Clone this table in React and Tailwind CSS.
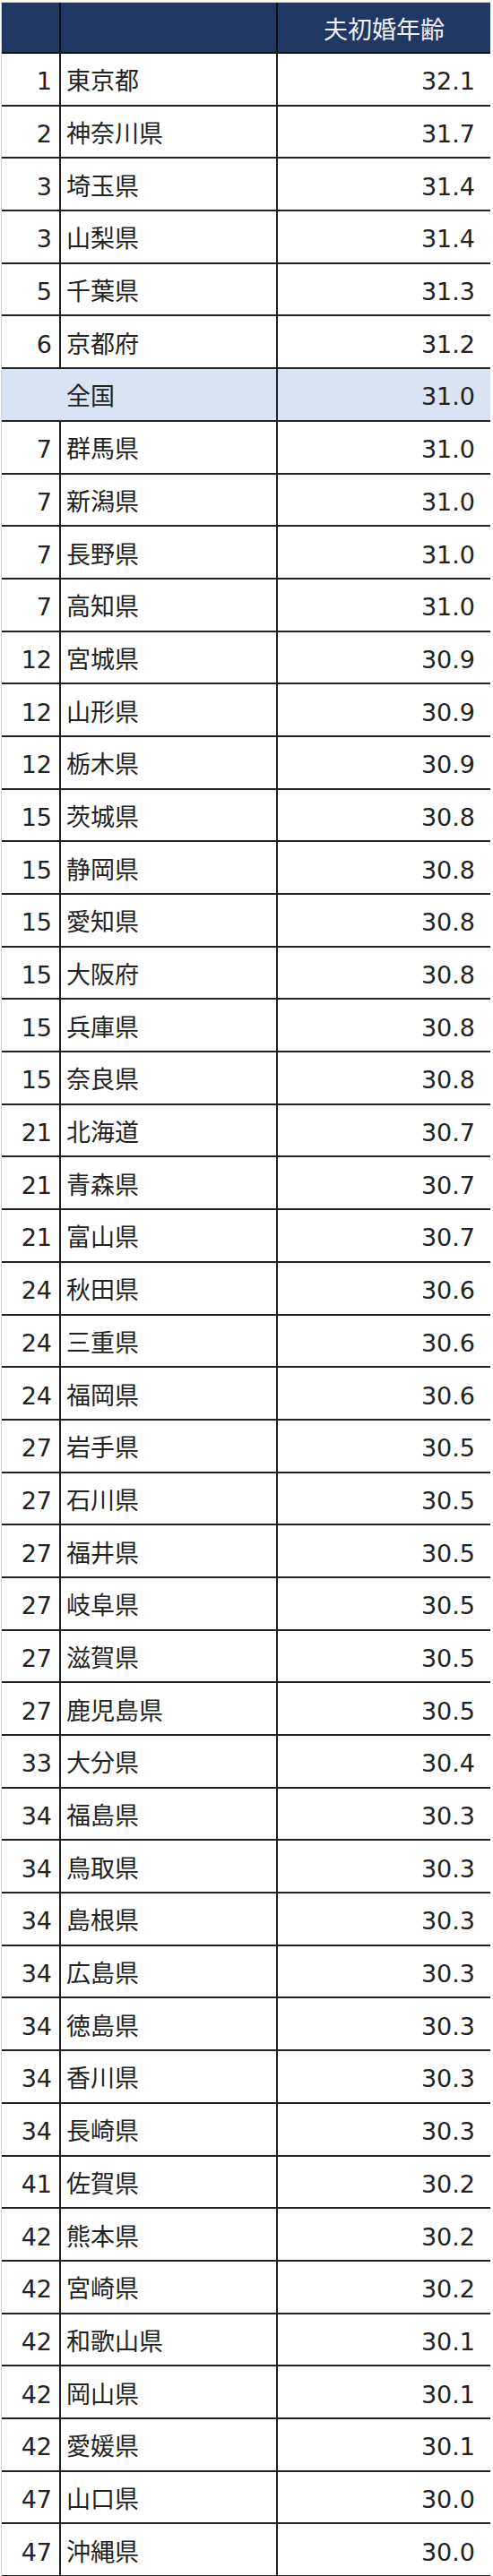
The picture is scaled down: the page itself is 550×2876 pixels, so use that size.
import React from "react";

const rows = [
  ["1", "東京都", "32.1"],
  ["2", "神奈川県", "31.7"],
  ["3", "埼玉県", "31.4"],
  ["3", "山梨県", "31.4"],
  ["5", "千葉県", "31.3"],
  ["6", "京都府", "31.2"],
  ["", "全国", "31.0"],
  ["7", "群馬県", "31.0"],
  ["7", "新潟県", "31.0"],
  ["7", "長野県", "31.0"],
  ["7", "高知県", "31.0"],
  ["12", "宮城県", "30.9"],
  ["12", "山形県", "30.9"],
  ["12", "栃木県", "30.9"],
  ["15", "茨城県", "30.8"],
  ["15", "静岡県", "30.8"],
  ["15", "愛知県", "30.8"],
  ["15", "大阪府", "30.8"],
  ["15", "兵庫県", "30.8"],
  ["15", "奈良県", "30.8"],
  ["21", "北海道", "30.7"],
  ["21", "青森県", "30.7"],
  ["21", "富山県", "30.7"],
  ["24", "秋田県", "30.6"],
  ["24", "三重県", "30.6"],
  ["24", "福岡県", "30.6"],
  ["27", "岩手県", "30.5"],
  ["27", "石川県", "30.5"],
  ["27", "福井県", "30.5"],
  ["27", "岐阜県", "30.5"],
  ["27", "滋賀県", "30.5"],
  ["27", "鹿児島県", "30.5"],
  ["33", "大分県", "30.4"],
  ["34", "福島県", "30.3"],
  ["34", "鳥取県", "30.3"],
  ["34", "島根県", "30.3"],
  ["34", "広島県", "30.3"],
  ["34", "徳島県", "30.3"],
  ["34", "香川県", "30.3"],
  ["34", "長崎県", "30.3"],
  ["41", "佐賀県", "30.2"],
  ["42", "熊本県", "30.2"],
  ["42", "宮崎県", "30.2"],
  ["42", "和歌山県", "30.1"],
  ["42", "岡山県", "30.1"],
  ["42", "愛媛県", "30.1"],
  ["47", "山口県", "30.0"],
  ["47", "沖縄県", "30.0"],
];

function Row({ rank, name, value }) {
  const national = name === "全国";
  return (
    <div
      className={`flex h-[58.7px] border-b-2 border-[#222] ${
        national ? "bg-[#dae3f3]" : "bg-white"
      }`}
    >
      <div
        className={`w-[66px] shrink-0 flex items-center justify-end pr-[8px] pt-[5px] border-r-2 ${
          national ? "border-[#dae3f3]" : "border-[#222]"
        }`}
      >
        {rank}
      </div>
      <div className="w-[242px] shrink-0 flex items-center pl-[6px] pt-[5px] border-r-2 border-[#222]">
        {name}
      </div>
      <div className="flex-1 flex items-center justify-end pr-[17px] pt-[5px]">
        {value}
      </div>
    </div>
  );
}

export default function App() {
  return (
    <div className="w-[550px] bg-white pt-[2px] pl-[1px]">
      <div
        className="w-[546px] border-t border-l border-[#d4d4d4] text-[27px] leading-none text-[#222]"
        style={{ fontFamily: '"DejaVu Sans", "Noto Sans CJK JP", sans-serif' }}
      >
        <div className="flex h-[57px] bg-[#203864] border-b-2 border-[#111] text-[#eef0f6]">
          <div className="w-[66px] shrink-0 border-r-2 border-[#111]" />
          <div className="w-[242px] shrink-0 border-r-2 border-[#111]" />
          <div className="flex-1 flex items-center justify-center pt-[5px]">
            夫初婚年齢
          </div>
        </div>
        {rows.map(([rank, name, value], i) => (
          <Row key={i} rank={rank} name={name} value={value} />
        ))}
      </div>
    </div>
  );
}
